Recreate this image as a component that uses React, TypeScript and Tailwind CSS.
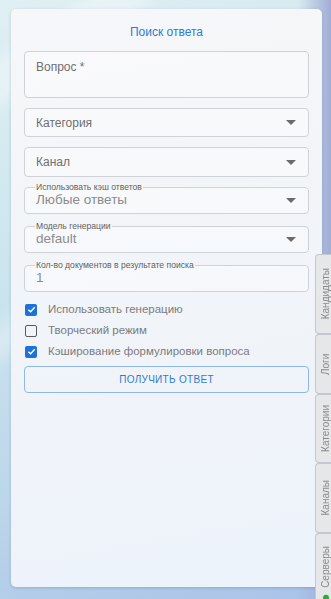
import React from "react";

const font = { fontFamily: "'Liberation Sans', Arial, sans-serif" };

function Arrow() {
  return (
    <svg width="10" height="5" viewBox="0 0 10 5" className="shrink-0">
      <path d="M0 0 L10 0 L5 5 Z" fill="#6b6b6b" />
    </svg>
  );
}

function SelectBox({ text, h = "h-[29px]" }: { text: string; h?: string }) {
  return (
    <div className={`flex ${h} items-center justify-between rounded-[4px] border border-[#cfd3d8] bg-white/40 pl-[11px] pr-[12px]`}>
      <span className="text-[12px] text-[#6f6f6f]">{text}</span>
      <Arrow />
    </div>
  );
}

function Outlined({ label, value, arrow }: { label: string; value: string; arrow?: boolean }) {
  return (
    <fieldset className="flex h-[32px] items-center justify-between rounded-[4px] border border-[#cfd3d8] bg-white/40 pl-[11px] pr-[12px] -mt-[5px]">
      <legend className="ml-[-1px] px-[1px] text-[8.6px] leading-[10px] text-[#5f5f5f]">{label}</legend>
      <span className="-mt-[4px] text-[13.5px] text-[#8c8c8c]">{value}</span>
      {arrow && (
        <span className="-mt-[4px]">
          <Arrow />
        </span>
      )}
    </fieldset>
  );
}

function Check({ checked, label }: { checked: boolean; label: string }) {
  return (
    <div className="flex h-[21px] items-center">
      {checked ? (
        <span className="ml-[1px] flex h-[12px] w-[12px] items-center justify-center rounded-[2px] bg-[#1d72d6]">
          <svg width="9" height="9" viewBox="0 0 10 10">
            <path d="M1.5 5.2 L4 7.5 L8.6 2.6" stroke="white" strokeWidth="1.6" fill="none" />
          </svg>
        </span>
      ) : (
        <span className="ml-[1px] h-[12px] w-[12px] rounded-[2px] border-[1.5px] border-[#5a5a5a]" />
      )}
      <span className="ml-[11px] text-[11.5px] text-[#7c7c7c]">{label}</span>
    </div>
  );
}

function Tab({ h, children }: { h: string; children: React.ReactNode }) {
  return (
    <div className={`${h} flex w-[30px] items-center justify-start rounded-l-[4px] border border-r-0 border-[#c4c7cd] bg-[#e6e7e9] pl-[4px]`}>
      <div className="rotate-180 text-[10px] leading-[11px] text-[#8a8a8a] [writing-mode:vertical-rl] text-center">
        {children}
      </div>
    </div>
  );
}

export default function App() {
  return (
    <div
      style={font}
      className="relative h-[599px] w-[331px] overflow-hidden bg-[linear-gradient(160deg,#e0eff3_0%,#cde6ee_35%,#bcd6ea_70%,#a9c2e8_100%)]"
    >
      <div className="pointer-events-none absolute inset-0 bg-[linear-gradient(90deg,transparent_0%,transparent_90%,#a2acd6_100%)]" />
      <div className="pointer-events-none absolute -left-[40px] top-[20px] h-[40px] w-[200px] -rotate-[35deg] bg-white/30 blur-[6px]" />
      <div className="pointer-events-none absolute -left-[60px] top-[300px] h-[30px] w-[200px] -rotate-[35deg] bg-white/30 blur-[8px]" />
      <div className="relative pl-[11px] pt-[9px]">
        <div className="flex h-[578px] w-[311px] flex-col rounded-[5px] bg-[linear-gradient(170deg,#f6f7f9_0%,#f1f4f8_50%,#edf3fb_100%)] px-[13px] shadow-[0_1px_3px_rgba(60,80,120,0.25)]">
          <div className="pt-[15px] text-center text-[12px] leading-[16px] text-[#2f7bd2]">Поиск ответа</div>
          <div className="mt-[11px] h-[47px] rounded-[4px] border border-[#cfd3d8] bg-white/40 px-[11px] pt-[8px] text-[12px] leading-[15px] text-[#6f6f6f]">
            Вопрос *
          </div>
          <div className="mt-[10px]">
            <SelectBox text="Категория" h="h-[29px]" />
          </div>
          <div className="mt-[10px]">
            <SelectBox text="Канал" h="h-[30px]" />
          </div>
          <div className="mt-[10px]">
            <Outlined label="Использовать кэш ответов" value="Любые ответы" arrow />
          </div>
          <div className="mt-[12px]">
            <Outlined label="Модель генерации" value="default" arrow />
          </div>
          <div className="mt-[12px]">
            <Outlined label="Кол-во документов в результате поиска" value="1" />
          </div>
          <div className="mt-[7px] flex flex-col">
            <Check checked label="Использовать генерацию" />
            <Check checked={false} label="Творческий режим" />
            <Check checked label="Кэширование формулировки вопроса" />
          </div>
          <div className="mt-[4px] flex h-[27px] items-center justify-center rounded-[4px] border border-[#8fb8ea] text-[10px] tracking-[0.3px] text-[#2f7bd2]">
            ПОЛУЧИТЬ ОТВЕТ
          </div>
        </div>
      </div>
      <div className="absolute left-[315px] top-[254px] flex flex-col">
        <Tab h="h-[80px]">Кандидаты</Tab>
        <Tab h="h-[60px]">
          Логи
          <br />
          обработки
        </Tab>
        <Tab h="h-[69px]">Категории</Tab>
        <Tab h="h-[70px]">Каналы</Tab>
        <Tab h="h-[80px]">
          <span className="mb-[4px] inline-block h-[6px] w-[6px] rounded-full bg-[#2eaa3a]" /> Серверы
        </Tab>
      </div>
    </div>
  );
}
